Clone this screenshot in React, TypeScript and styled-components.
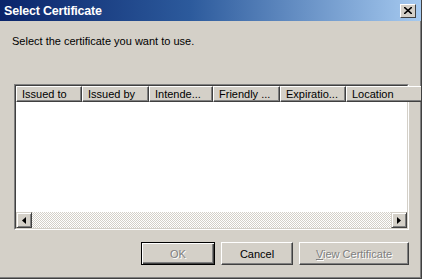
import * as React from 'react';
import styled, { createGlobalStyle } from 'styled-components';

const Global = createGlobalStyle`
    html, body {
        margin: 0;
        padding: 0;
        background: #d4d0c8;
    }
    body {
        font-family: "Liberation Sans", Arial, sans-serif;
        font-size: 11px;
        color: #000;
    }
`;

const Window = styled.div`
    width: 422px;
    height: 279px;
    box-sizing: border-box;
    display: flex;
    flex-direction: column;
    background: #d4d0c8;
    border-right: 1px solid #404040;
    border-bottom: 1px solid #404040;
    box-shadow: inset -1px -1px 0 #808080;
    overflow: hidden;
`;

const TitleBar = styled.div`
    height: 21px;
    flex-shrink: 0;
    display: flex;
    align-items: center;
    justify-content: space-between;
    padding: 0 4px 0 4px;
    background: linear-gradient(to right, #0a246a 0%, #2c5a9c 45%, #a6caf0 100%);
    h1 {
        margin: 0;
        font-size: 12.5px;
        font-weight: bold;
        color: #fff;
        letter-spacing: -0.2px;
    }
`;

const CloseButton = styled.div`
    width: 16px;
    height: 14px;
    box-sizing: border-box;
    margin-right: 1px;
    background: #d4d0c8;
    border-top: 1px solid #fff;
    border-left: 1px solid #fff;
    border-right: 1px solid #404040;
    border-bottom: 1px solid #404040;
    display: flex;
    align-items: center;
    justify-content: center;
`;

const Body = styled.div`
    flex: 1;
    display: flex;
    flex-direction: column;
    padding: 13px 12px 13px 14px;
`;

const Prompt = styled.p`
    margin: 0 0 0 -2px;
    font-size: 11px;
    line-height: 14px;
`;

const ListView = styled.div`
    margin-top: 36px;
    height: 146px;
    box-sizing: border-box;
    display: flex;
    flex-direction: column;
    border-top: 1px solid #808080;
    border-left: 1px solid #808080;
    border-right: 1px solid #fff;
    border-bottom: 1px solid #fff;
`;

const ListInner = styled.div`
    flex: 1;
    display: flex;
    flex-direction: column;
    background: #fff;
    border-top: 1px solid #404040;
    border-left: 1px solid #404040;
    border-right: 1px solid #d4d0c8;
    border-bottom: 1px solid #d4d0c8;
`;

const Header = styled.div`
    display: flex;
    height: 16px;
    flex-shrink: 0;
`;

const HeaderCell = styled.div<{ w: number }>`
    width: ${({ w }) => w}px;
    flex-shrink: 0;
    box-sizing: border-box;
    background: #d4d0c8;
    border-top: 1px solid #fff;
    border-left: 1px solid #fff;
    border-right: 1px solid #404040;
    border-bottom: 1px solid #404040;
    box-shadow: inset -1px -1px 0 #808080;
    padding: 0 0 0 5px;
    font-size: 11px;
    line-height: 14px;
    white-space: nowrap;
    overflow: hidden;
`;

const Rows = styled.div`
    flex: 1;
    background: #fff;
`;

const HScroll = styled.div`
    display: flex;
    height: 16px;
    flex-shrink: 0;
`;

const Track = styled.div`
    flex: 1;
    background-color: #d4d0c8;
    background-image:
        linear-gradient(45deg, #fff 25%, transparent 25%, transparent 75%, #fff 75%),
        linear-gradient(45deg, #fff 25%, transparent 25%, transparent 75%, #fff 75%);
    background-size: 2px 2px;
    background-position: 0 0, 1px 1px;
`;

const ArrowButton = styled.div`
    width: 16px;
    height: 16px;
    box-sizing: border-box;
    background: #d4d0c8;
    border-top: 1px solid #d4d0c8;
    border-left: 1px solid #d4d0c8;
    border-right: 1px solid #404040;
    border-bottom: 1px solid #404040;
    box-shadow: inset 1px 1px 0 #fff, inset -1px -1px 0 #808080;
    display: flex;
    align-items: center;
    justify-content: center;
`;

const ButtonRow = styled.div`
    display: flex;
    justify-content: flex-end;
    gap: 6px;
    margin-top: 12px;
`;

const Button = styled.div<{ w: number; disabled?: boolean }>`
    width: ${({ w }) => w}px;
    height: 23px;
    box-sizing: border-box;
    display: flex;
    align-items: center;
    justify-content: center;
    background: #d4d0c8;
    border-top: 1px solid #fff;
    border-left: 1px solid #fff;
    border-right: 1px solid #404040;
    border-bottom: 1px solid #404040;
    box-shadow: inset -1px -1px 0 #808080;
    font-size: 11px;
    color: ${({ disabled }) => (disabled ? '#808080' : '#000')};
    text-shadow: ${({ disabled }) => (disabled ? '1px 1px 0 #fff' : 'none')};
    u {
        text-decoration: underline;
    }
`;

const DefaultButton = styled(Button)`
    border: 1px solid #000;
    box-shadow: inset 1px 1px 0 #fff, inset -1px -1px 0 #404040, inset -2px -2px 0 #808080;
`;

const columns = [
    { label: 'Issued to', w: 66 },
    { label: 'Issued by', w: 67 },
    { label: 'Intende...', w: 64 },
    { label: 'Friendly ...', w: 67 },
    { label: 'Expiratio...', w: 66 },
    { label: 'Location', w: 80 },
];

const Arrow = ({ dir }: { dir: 'left' | 'right' }) => (
    <svg width="4" height="7" viewBox="0 0 4 7">
        {dir === 'left'
            ? <path d="M4 0 L0 3.5 L4 7 Z" fill="#000" />
            : <path d="M0 0 L4 3.5 L0 7 Z" fill="#000" />}
    </svg>
);

export default function App() {
    return (
        <>
            <Global />
            <Window>
                <TitleBar>
                    <h1>Select Certificate</h1>
                    <CloseButton>
                        <svg width="8" height="7" viewBox="0 0 8 7">
                            <path d="M0 0 L8 7 M8 0 L0 7" stroke="#000" strokeWidth="1.6" />
                        </svg>
                    </CloseButton>
                </TitleBar>
                <Body>
                    <Prompt>Select the certificate you want to use.</Prompt>
                    <ListView>
                        <ListInner>
                            <Header>
                                {columns.map(c => (
                                    <HeaderCell key={c.label} w={c.w}>{c.label}</HeaderCell>
                                ))}
                            </Header>
                            <Rows />
                            <HScroll>
                                <ArrowButton><Arrow dir="left" /></ArrowButton>
                                <Track />
                                <ArrowButton><Arrow dir="right" /></ArrowButton>
                            </HScroll>
                        </ListInner>
                    </ListView>
                    <ButtonRow>
                        <DefaultButton w={74} disabled>OK</DefaultButton>
                        <Button w={72}>Cancel</Button>
                        <Button w={110} disabled><span><u>V</u>iew Certificate</span></Button>
                    </ButtonRow>
                </Body>
            </Window>
        </>
    );
}
